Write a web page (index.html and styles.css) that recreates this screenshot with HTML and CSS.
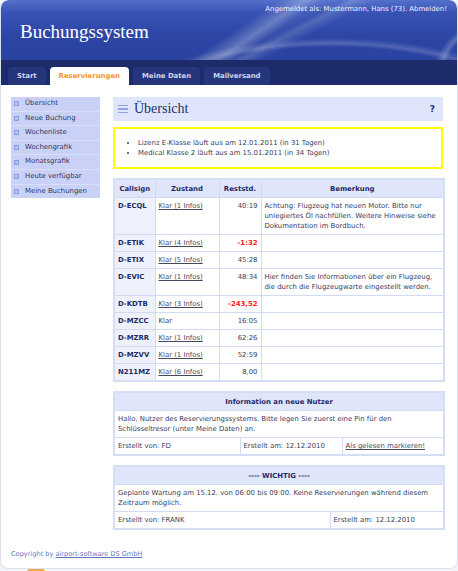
FILE: index.html
```html
<!DOCTYPE html>
<html lang="de">
<head>
<meta charset="utf-8">
<title>Buchungssystem</title>
<link rel="stylesheet" href="styles.css">
</head>
<body>
<div class="page">
  <header class="top">
    <div class="userline">Angemeldet als: Mustermann, Hans (73). <a href="#">Abmelden!</a></div>
    <h1 class="brand">Buchungssystem</h1>
  </header>
  <nav class="tabs">
    <a class="tab" href="#">Start</a>
    <a class="tab active" href="#">Reservierungen</a>
    <a class="tab" href="#">Meine Daten</a>
    <a class="tab" href="#">Mailversand</a>
  </nav>
  <div class="main">
    <aside class="side">
      <ul class="menu">
        <li><span class="sq"></span>Übersicht</li>
        <li><span class="sq"></span>Neue Buchung</li>
        <li><span class="sq"></span>Wochenliste</li>
        <li><span class="sq"></span>Wochengrafik</li>
        <li><span class="sq"></span>Monatsgrafik</li>
        <li><span class="sq"></span>Heute verfügbar</li>
        <li><span class="sq"></span>Meine Buchungen</li>
      </ul>
    </aside>
    <section class="content">
      <div class="titlebar">
        <span class="ham"><i></i><i></i><i></i></span>
        <h2 class="title">Übersicht</h2>
        <span class="help">?</span>
      </div>
      <div class="warn">
        <ul>
          <li>Lizenz E-Klasse läuft aus am 12.01.2011 (in 31 Tagen)</li>
          <li>Medical Klasse 2 läuft aus am 15.01.2011 (in 34 Tagen)</li>
        </ul>
      </div>
      <table class="grid">
        <colgroup><col class="c1"><col class="c2"><col class="c3"><col class="c4"></colgroup>
        <thead>
          <tr><th>Callsign</th><th>Zustand</th><th>Reststd.</th><th>Bemerkung</th></tr>
        </thead>
        <tbody>
          <tr><td class="cs">D-ECQL</td><td><a href="#">Klar (1 Infos)</a></td><td class="num">40:19</td><td>Achtung: Flugzeug hat neuen Motor. Bitte nur<br>unlegiertes Öl nachfüllen. Weitere Hinweise siehe<br>Dokumentation im Bordbuch.</td></tr>
          <tr><td class="cs">D-ETIK</td><td><a href="#">Klar (4 Infos)</a></td><td class="num neg">-1:32</td><td></td></tr>
          <tr><td class="cs">D-ETIX</td><td><a href="#">Klar (5 Infos)</a></td><td class="num">45:28</td><td></td></tr>
          <tr><td class="cs">D-EVIC</td><td><a href="#">Klar (1 Infos)</a></td><td class="num">48:34</td><td>Hier finden Sie Informationen über ein Flugzeug,<br>die durch die Flugzeugwarte eingestellt werden.</td></tr>
          <tr><td class="cs">D-KDTB</td><td><a href="#">Klar (3 Infos)</a></td><td class="num neg">-243,52</td><td></td></tr>
          <tr><td class="cs">D-MZCC</td><td>Klar</td><td class="num">16:05</td><td></td></tr>
          <tr><td class="cs">D-MZRR</td><td><a href="#">Klar (1 Infos)</a></td><td class="num">62:26</td><td></td></tr>
          <tr><td class="cs">D-MZVV</td><td><a href="#">Klar (1 Infos)</a></td><td class="num">52:59</td><td></td></tr>
          <tr><td class="cs">N211MZ</td><td><a href="#">Klar (6 Infos)</a></td><td class="num">8,00</td><td></td></tr>
        </tbody>
      </table>
      <table class="note">
        <colgroup><col class="n1"><col class="n2"><col class="n3"></colgroup>
        <tr><th colspan="3">Information an neue Nutzer</th></tr>
        <tr><td colspan="3">Hallo, Nutzer des Reservierungssystems. Bitte legen Sie zuerst eine Pin für den<br>Schlüsseltresor (unter Meine Daten) an.</td></tr>
        <tr><td>Erstellt von: FD</td><td>Erstellt am: 12.12.2010</td><td><a href="#">Als gelesen markieren!</a></td></tr>
      </table>
      <table class="note">
        <colgroup><col class="m1"><col class="m2"></colgroup>
        <tr><th colspan="2">---- WICHTIG ----</th></tr>
        <tr><td colspan="2">Geplante Wartung am 15.12. von 06:00 bis 09:00. Keine Reservierungen während diesem<br>Zeitraum möglich.</td></tr>
        <tr><td>Erstellt von: FRANK</td><td>Erstellt am: 12.12.2010</td></tr>
      </table>
    </section>
  </div>
  <footer class="foot">Copyright by <a href="#">airport-software DS GmbH</a></footer>
</div>
<div class="peek"></div>
</body>
</html>
```

FILE: styles.css
```css
html, body {
  margin: 0;
  padding: 0;
  background: #f3f4f8;
}
body {
  font-family: "DejaVu Sans", Verdana, sans-serif;
  font-size: 6.9px;
  color: #3a3d5c;
}
.page {
  width: 456px;
  height: 568px;
  background: #ffffff;
  border: 1px solid #dce1ee;
  border-top: 0;
  border-radius: 8px 8px 8px 8px;
  display: flex;
  flex-direction: column;
  box-sizing: content-box;
  overflow: hidden;
}
.top {
  height: 60px;
  border-radius: 8px 8px 0 0;
  background:
    linear-gradient(146deg, transparent 0 51%, rgba(255,255,255,0.10) 53%, rgba(255,255,255,0.28) 56%, rgba(255,255,255,0.06) 59%, transparent 63%),
    linear-gradient(152deg, transparent 0 60%, rgba(255,255,255,0.16) 62%, transparent 66%),
    radial-gradient(ellipse 260px 90px at 330px 110px, transparent 70%, rgba(255,255,255,0.18) 74%, transparent 80%),
    radial-gradient(ellipse 120px 80px at 520px 70px, transparent 62%, rgba(255,255,255,0.22) 66%, transparent 72%),
    linear-gradient(180deg, #5470cc 0%, #3752b3 22%, #2d46a6 60%, #2a42a0 100%);
  display: flex;
  flex-direction: column;
}
.userline {
  text-align: right;
  padding: 4px 10px 0 0;
  line-height: 10px;
  color: #eef1ff;
}
.userline a {
  color: #eef1ff;
  text-decoration: none;
}
.brand {
  margin: 8px 0 0 19px;
  font-family: "Liberation Serif", "Times New Roman", serif;
  font-weight: normal;
  font-size: 19px;
  line-height: 20px;
  color: #ffffff;
}
.tabs {
  height: 25px;
  box-sizing: border-box;
  padding: 7px 0 0 7px;
  background: #1e2b6a;
  display: flex;
  gap: 4px;
}
.tab {
  height: 18px;
  line-height: 18px;
  padding: 0 9px;
  border-radius: 4px 4px 0 0;
  background: #26367d;
  color: #cfd6ee;
  font-weight: bold;
  text-decoration: none;
}
.tab.active {
  background: #ffffff;
  color: #f7941d;
}
.main {
  display: flex;
  gap: 13px;
  padding: 12px 0 0 10px;
}
.side {
  width: 89px;
  flex: none;
}
.menu {
  list-style: none;
  margin: 0;
  padding: 0;
  background: #c9d2f6;
}
.menu li {
  height: 13.6px;
  line-height: 13.6px;
  border-bottom: 1px solid #d9dffa;
  padding-left: 3px;
  display: flex;
  align-items: center;
  color: #2f3566;
}
.menu li:last-child {
  border-bottom: 0;
}
.sq {
  width: 3px;
  height: 3px;
  border: 1px solid #8a9ee6;
  background: #b3c1f2;
  margin-right: 6px;
  flex: none;
}
.content {
  width: 330px;
  flex: none;
}
.titlebar {
  height: 24px;
  background: #dfe5fa;
  display: flex;
  align-items: center;
  padding: 0 8px 0 5px;
}
.ham {
  width: 10px;
  display: flex;
  flex-direction: column;
  gap: 2px;
  margin-right: 6px;
}
.ham i {
  display: block;
  height: 1.3px;
  background: #8fa2e3;
}
.title {
  margin: 0;
  flex: 1;
  font-family: "Liberation Serif", "Times New Roman", serif;
  font-weight: normal;
  font-size: 14px;
  line-height: 16px;
  color: #24306c;
}
.help {
  font-weight: bold;
  font-size: 9px;
  color: #24306c;
}
.warn {
  margin-top: 6px;
  border: 2px solid #ffff00;
  padding: 9px 0;
}
.warn ul {
  margin: 0;
  padding-left: 23px;
  line-height: 10px;
}
.grid, .note {
  width: 330px;
  border-collapse: collapse;
  border: 2px solid #d6def6;
  table-layout: fixed;
}
.grid {
  margin-top: 9px;
}
.note {
  margin-top: 9px;
}
.c1 { width: 41px; }
.c2 { width: 64px; }
.c3 { width: 42px; }
.c4 { width: 183px; }
.n1 { width: 126px; }
.n2 { width: 102px; }
.n3 { width: 102px; }
.m1 { width: 216px; }
.m2 { width: 114px; }
th, td {
  border: 1px solid #d2daf4;
  padding: 3px 3px;
  line-height: 10px;
  text-align: left;
  vertical-align: top;
  white-space: nowrap;
}
th {
  background: #dfe6fa;
  color: #1f2a66;
  font-weight: bold;
  text-align: center;
  padding: 4px 3px 3px;
}
td.cs {
  background: #eef1fc;
  color: #1f2a66;
  font-weight: bold;
}
td.num {
  text-align: right;
}
td.neg {
  color: #ff1a1a;
  font-weight: bold;
}
td a {
  color: #46495e;
  text-decoration: underline;
}
.foot {
  margin-top: auto;
  padding: 0 0 9px 10px;
  line-height: 10px;
  font-size: 6.6px;
  color: #6376c4;
}
.foot a {
  color: #6376c4;
  text-decoration: underline;
}
.peek {
  width: 18px;
  height: 3px;
  margin-left: 27px;
  background: #f7a64a;
  border-radius: 3px 3px 0 0;
}
```
